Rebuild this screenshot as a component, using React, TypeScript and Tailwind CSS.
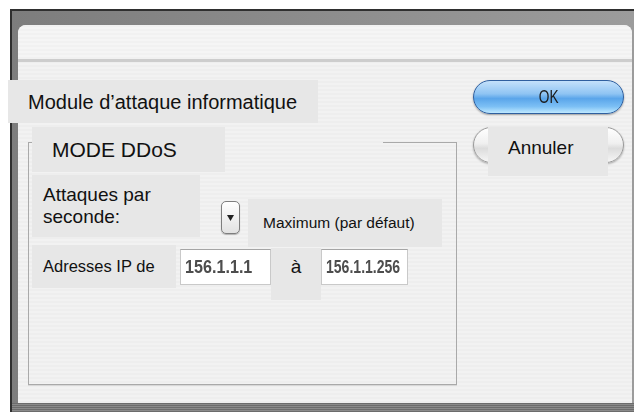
import type { ReactNode } from "react";

// Small grey caption plate used for every label in the dialog
function Plate({ className, children }: { className: string; children: ReactNode }) {
  return <div className={`bg-[#e7e7e7] text-[#111] ${className}`}>{children}</div>;
}

function IpField({ value, width, text }: { value: string; width: string; text: string }) {
  return (
    <div
      className={`${width} mt-[4px] h-[36px] bg-white border border-[#c9c9c9] border-t-[#a5a5a5] flex items-center pl-[4px] overflow-hidden`}
    >
      <span className={`inline-block origin-left font-bold text-[#4d4d4d] blur-[0.3px] whitespace-nowrap ${text}`}>
        {value}
      </span>
    </div>
  );
}

export default function App() {
  return (
    <div className="w-[634px] h-[412px] bg-white pt-[9px] pl-[10px] overflow-hidden font-['Liberation_Sans',Arial,sans-serif]">
      {/* window frame */}
      <div className="h-[403px] flex flex-col border-t-[2px] border-l-[2px] border-[#2f2f2f] bg-[linear-gradient(90deg,#7d7d7d,#9c9c9c)] pt-[14px]">
        <div className="flex-1 flex flex-col ml-[6px] mr-[2px] rounded-t-[8px] bg-[image:repeating-linear-gradient(180deg,#eeeeee_0px,#eeeeee_2px,#f2f2f2_2px,#f2f2f2_4px)]">
          {/* title bar */}
          <div className="h-[37px] rounded-t-[8px] border-b-[3px] border-[#cdcdcd] bg-[image:repeating-linear-gradient(180deg,#f1f1f1_0px,#f1f1f1_2px,#f5f5f5_2px,#f5f5f5_4px)]" />

          <div className="flex-1 flex justify-between pt-[18px] pr-[8px]">
            {/* left column */}
            <div className="flex flex-col">
              <Plate className="-ml-[10px] w-[310px] h-[43px] flex items-center pl-[20px] text-[20px]">
                Module d’attaque informatique
              </Plate>

              <div className="relative mt-[4px] ml-[10px] w-[429px] pt-[15px]">
                {/* group box, top edge broken where the heading sits */}
                <div className="flex h-[1px]">
                  <div className="w-[4px] bg-[#a9a9a9]" />
                  <div className="flex-1" />
                  <div className="w-[74px] bg-[#a9a9a9]" />
                </div>
                <div className="h-[242px] border-x border-b border-[#a9a9a9] shadow-[0_1px_0_#d8d8d8] pt-[32px] pl-[3px]">
                  <div className="flex items-start">
                    <Plate className="w-[168px] h-[62px] flex items-center pl-[11px] text-[19px] leading-[22px]">
                      <div>
                        Attaques par
                        <br />
                        seconde:
                      </div>
                    </Plate>
                    <div className="ml-[21px] mt-[26px] w-[19px] h-[33px] rounded-[5px] border border-[#7e7e7e] bg-[linear-gradient(180deg,#ffffff,#e2e2e2)] shadow-[0_1px_1px_rgba(0,0,0,0.25)] flex items-center justify-center">
                      <svg width="7" height="6" viewBox="0 0 7 6">
                        <path d="M0 0H7L3.5 6Z" fill="#222" />
                      </svg>
                    </div>
                    <Plate className="ml-[8px] mt-[24px] w-[194px] h-[48px] flex items-center pl-[15px] text-[15.5px]">
                      Maximum (par défaut)
                    </Plate>
                  </div>

                  <div className="-mt-[2px] flex items-start">
                    <Plate className="w-[144px] h-[43px] flex items-center pl-[11px] text-[16.5px]">
                      Adresses IP de
                    </Plate>
                    <div className="ml-[4px]">
                      <IpField value="156.1.1.1" width="w-[91px]" text="text-[19px] scale-x-[0.85]" />
                    </div>
                    <Plate className="mt-[3px] w-[50px] h-[52px] flex justify-center pt-[8px] text-[19px] leading-[22px]">
                      à
                    </Plate>
                    <IpField value="156.1.1.256" width="w-[87px]" text="text-[18px] scale-x-[0.78]" />
                  </div>
                </div>

                <Plate className="absolute top-0 left-[4px] w-[193px] h-[45px] flex items-center pl-[20px] text-[21px]">
                  MODE DDoS
                </Plate>
              </div>
            </div>

            {/* buttons */}
            <div className="w-[151px] flex flex-col">
              <div className="h-[34px] rounded-full border border-[#2f5f9f] bg-[linear-gradient(180deg,#c4e1fb_0%,#8fc4f3_40%,#5aa5ea_55%,#7dc0f5_80%,#bfe9ff_100%)] shadow-[0_1px_2px_rgba(0,0,0,0.35)] flex items-center justify-center">
                <span className="inline-block scale-x-[0.72] text-[19px] font-medium text-[#1b1b1b]">OK</span>
              </div>
              <div className="relative mt-[13px] h-[36px] rounded-full border border-[#9a9a9a] bg-[linear-gradient(180deg,#ffffff_0%,#f0f0f0_45%,#dcdcdc_60%,#f6f6f6_100%)] shadow-[0_1px_2px_rgba(0,0,0,0.3)]">
                <Plate className="absolute -top-[1px] left-[14px] w-[120px] h-[49px] pl-[20px] pt-[10px] text-[19px] leading-[22px]">
                  Annuler
                </Plate>
              </div>
            </div>
          </div>
        </div>
        {/* bottom edge of the frame */}
        <div className="h-[9px] bg-[image:repeating-linear-gradient(180deg,#6c6c6c_0px,#6c6c6c_1px,#8a8a8a_1px,#8a8a8a_2px)]" />
      </div>
    </div>
  );
}
